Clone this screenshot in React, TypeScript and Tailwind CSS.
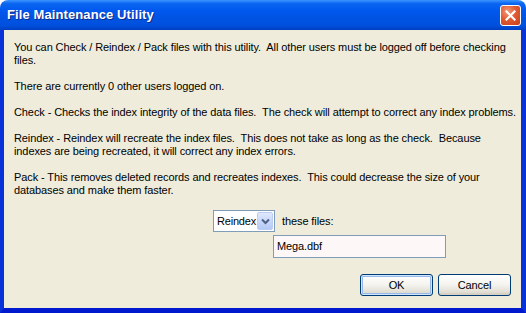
import React from "react";

const paragraphs: string[][] = [
  [
    "You can Check / Reindex / Pack files with this utility.  All other users must be logged off before checking",
    "files.",
  ],
  ["There are currently 0 other users logged on."],
  ["Check - Checks the index integrity of the data files.  The check will attempt to correct any index problems."],
  [
    "Reindex - Reindex will recreate the index files.  This does not take as long as the check.  Because",
    "indexes are being recreated, it will correct any index errors.",
  ],
  [
    "Pack - This removes deleted records and recreates indexes.  This could decrease the size of your",
    "databases and make them faster.",
  ],
];

const XpButton: React.FC<{ label: string; isDefault?: boolean }> = ({ label, isDefault }) => (
  <button
    className={`w-[73px] h-[22px] rounded-[3px] border border-[#003c74] text-[11px] text-black bg-gradient-to-b from-[#ffffff] via-[#f4f3ee] to-[#d9d6c9] ${
      isDefault ? "shadow-[inset_0_0_0_1px_#cee7ff,inset_0_0_0_2px_#98b8ea]" : "shadow-[inset_0_-2px_0_#d6d0c5]"
    }`}
  >
    {label}
  </button>
);

const App: React.FC = () => {
  return (
    <div className="w-[526px] h-[313px] bg-white flex flex-col font-['Liberation_Sans',Arial,sans-serif]">
      {/* title bar */}
      <div className="h-[30px] rounded-t-[8px] flex items-center justify-between pl-[7px] pr-[5px] bg-[linear-gradient(to_bottom,#3d95ff_0%,#0a66f0_12%,#0058ee_35%,#0054e3_60%,#0050dd_85%,#003fc0_100%)]">
        <span className="text-white font-bold text-[13px] tracking-[0.1px] [text-shadow:1px_1px_0_#0c2a8a]">
          File Maintenance Utility
        </span>
        <div className="w-[21px] h-[21px] rounded-[3px] border border-white flex items-center justify-center bg-[radial-gradient(circle_at_35%_30%,#f49a7a_0%,#e15a32_45%,#c8401c_100%)]">
          <svg width="11" height="11" viewBox="0 0 11 11">
            <path d="M1.5 1.5 L9.5 9.5 M9.5 1.5 L1.5 9.5" stroke="#ffffff" strokeWidth="2.2" strokeLinecap="square" />
          </svg>
        </div>
      </div>

      {/* dialog body */}
      <div className="flex-1 flex flex-col bg-[#efecdc] border-l-[4px] border-r-[5px] border-b-[5px] border-[#0831d9] border-b-[#0019cf] pt-[11px] pl-[10px] pr-[10px] text-[11px] leading-[13px] tracking-[-0.1px] text-black">
        <div className="flex flex-col gap-[13px]">
          {paragraphs.map((p, i) => (
            <p key={i} className="whitespace-pre">
              {p.map((line, j) => (
                <React.Fragment key={j}>
                  {line}
                  {j < p.length - 1 && <br />}
                </React.Fragment>
              ))}
            </p>
          ))}
        </div>

        <div className="mt-[13px] ml-[199px] flex flex-col">
          <div className="flex items-center gap-[7px]">
            <div className="w-[62px] h-[22px] flex items-center border border-[#7f9db9] bg-white p-[1px]">
              <span className="whitespace-nowrap pl-[2px] text-[11px] tracking-[-0.2px]">Reindex</span>
              <div className="ml-auto w-[16px] h-full rounded-[2px] flex items-center justify-center bg-gradient-to-b from-[#dfe8fd] to-[#b4c9f5] border border-[#bccdf4]">
                <svg width="9" height="7" viewBox="0 0 9 7">
                  <path d="M1 1.5 L4.5 5 L8 1.5" fill="none" stroke="#4d6185" strokeWidth="2" />
                </svg>
              </div>
            </div>
            <span>these files:</span>
          </div>
          <div className="mt-[3px] ml-[60px] w-[173px] h-[23px] border border-[#7f9db9] bg-[#fef7f7] flex items-center pl-[3px] text-[11px]">
            Mega.dbf
          </div>
        </div>

        <div className="mt-[16px] flex justify-end gap-[5px]">
          <XpButton label="OK" isDefault />
          <XpButton label="Cancel" />
        </div>
      </div>
    </div>
  );
};

export default App;
